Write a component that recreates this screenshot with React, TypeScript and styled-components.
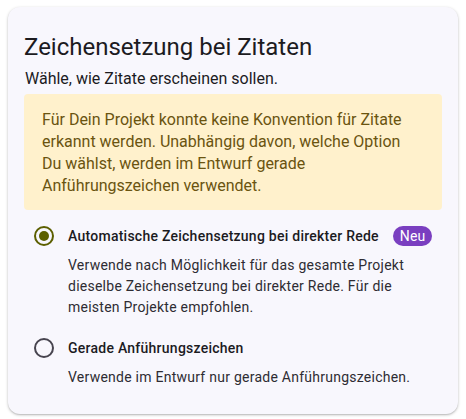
import React, { useState } from 'react'
import styled, { createGlobalStyle } from 'styled-components'

const GlobalStyle = createGlobalStyle`
  body {
    margin: 0;
    background: #ffffff;
    font-family: Roboto, 'Liberation Sans', sans-serif;
  }
`

type Choice = 'auto' | 'straight'

const options: { id: Choice; label: string; description: string; isNew?: boolean }[] = [
  {
    id: 'auto',
    label: 'Automatische Zeichensetzung bei direkter Rede',
    description:
      'Verwende nach Möglichkeit für das gesamte Projekt dieselbe Zeichensetzung bei direkter Rede. Für die meisten Projekte empfohlen.',
    isNew: true,
  },
  {
    id: 'straight',
    label: 'Gerade Anführungszeichen',
    description: 'Verwende im Entwurf nur gerade Anführungszeichen.',
  },
]

export default function App(): JSX.Element {
  const [choice, setChoice] = useState<Choice>('auto')

  return (
    <Page>
      <GlobalStyle />
      <Card>
        <Title>Zeichensetzung bei Zitaten</Title>
        <Subtitle>Wähle, wie Zitate erscheinen sollen.</Subtitle>
        <Notice>
          Für Dein Projekt konnte keine Konvention für Zitate erkannt werden.
          Unabhängig davon, welche Option Du wählst, werden im Entwurf gerade
          Anführungszeichen verwendet.
        </Notice>
        <OptionList>
          {options.map((opt) => (
            <Option key={opt.id} onClick={() => setChoice(opt.id)}>
              <RadioCell>
                <Radio checked={choice === opt.id} />
              </RadioCell>
              <OptionBody>
                <OptionLabel>
                  {opt.label}
                  {opt.isNew && <Badge>Neu</Badge>}
                </OptionLabel>
                <OptionText>{opt.description}</OptionText>
              </OptionBody>
            </Option>
          ))}
        </OptionList>
      </Card>
    </Page>
  )
}

const Page = styled.div`
  padding: 7px 8px 8px 8px;
`

const Card = styled.section`
  background: #f8f7fd;
  border-radius: 12px;
  box-shadow: 0 1px 3px rgba(0, 0, 0, 0.25), 0 1px 1px rgba(0, 0, 0, 0.08);
  padding: 24px 16px 26px 16px;
  color: #1c1b1f;
`

const Title = styled.h2`
  margin: 0;
  font-size: 24px;
  line-height: 32px;
  font-weight: 400;
`

const Subtitle = styled.p`
  margin: 4px 0 0 1px;
  font-size: 16px;
  line-height: 24px;
  color: #1c1b1f;
`

const Notice = styled.div`
  margin-top: 3px;
  background: #fff1cc;
  border-radius: 4px;
  padding: 15px 30px 13px 18px;
  font-size: 16px;
  line-height: 22px;
  color: #6a5410;
`

const OptionList = styled.div`
  display: flex;
  flex-direction: column;
  gap: 19px;
  margin-top: 15px;
  padding-left: 10px;
`

const Option = styled.label`
  display: grid;
  grid-template-columns: 34px 1fr;
  cursor: pointer;
`

const RadioCell = styled.div`
  display: flex;
  align-items: flex-start;
  padding-top: 1px;
`

const Radio = styled.span<{ checked: boolean }>`
  box-sizing: border-box;
  width: 20px;
  height: 20px;
  border-radius: 50%;
  border: 2px solid ${(p) => (p.checked ? '#5c5f00' : '#47444f')};
  display: flex;
  align-items: center;
  justify-content: center;
  &::after {
    content: '';
    width: 10px;
    height: 10px;
    border-radius: 50%;
    background: #5c5f00;
    display: ${(p) => (p.checked ? 'block' : 'none')};
  }
`

const OptionBody = styled.div`
  display: flex;
  flex-direction: column;
  gap: 8px;
`

const OptionLabel = styled.div`
  display: flex;
  align-items: center;
  gap: 14px;
  font-size: 14px;
  line-height: 22px;
  font-weight: 500;
  color: #1c1b1f;
  letter-spacing: 0.25px;
`

const Badge = styled.span`
  background: #7a3fc0;
  color: #ffffff;
  font-size: 14px;
  font-weight: 400;
  line-height: 20px;
  padding: 0 7px;
  border-radius: 10px;
  letter-spacing: 0.1px;
`

const OptionText = styled.p`
  margin: 0;
  font-size: 14px;
  line-height: 21px;
  color: #2e2c33;
  letter-spacing: 0.25px;
  padding-right: 12px;
`
